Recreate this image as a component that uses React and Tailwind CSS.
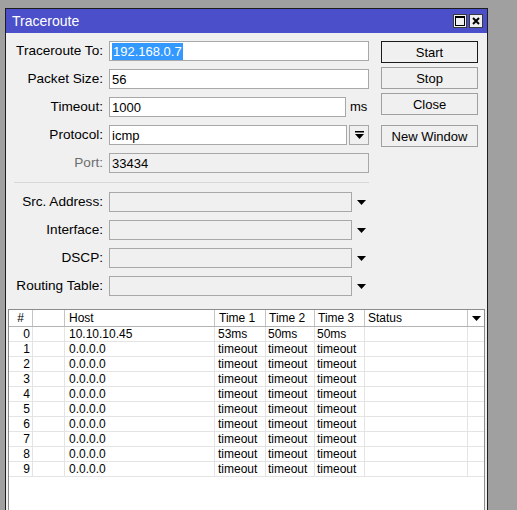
import React from 'react';

const rows = [
  ['0', '10.10.10.45', '53ms', '50ms', '50ms'],
  ['1', '0.0.0.0', 'timeout', 'timeout', 'timeout'],
  ['2', '0.0.0.0', 'timeout', 'timeout', 'timeout'],
  ['3', '0.0.0.0', 'timeout', 'timeout', 'timeout'],
  ['4', '0.0.0.0', 'timeout', 'timeout', 'timeout'],
  ['5', '0.0.0.0', 'timeout', 'timeout', 'timeout'],
  ['6', '0.0.0.0', 'timeout', 'timeout', 'timeout'],
  ['7', '0.0.0.0', 'timeout', 'timeout', 'timeout'],
  ['8', '0.0.0.0', 'timeout', 'timeout', 'timeout'],
  ['9', '0.0.0.0', 'timeout', 'timeout', 'timeout'],
];

const DownArrow = () => (
  <svg width="9" height="5" viewBox="0 0 9 5" className="block">
    <path d="M0 0 H9 L4.5 5 Z" fill="#000" />
  </svg>
);

const Label = ({ children, muted }) => (
  <div className={`w-[98px] shrink-0 text-right pr-[1px] text-[13.6px] ${muted ? 'text-[#6d6d6d]' : 'text-black'}`}>
    {children}
  </div>
);

const Field = ({ value, w = 'w-[260px]', disabled }) => (
  <div
    className={`${w} h-[20px] border border-[#a8a8a8] ${disabled ? 'bg-[#f0f0f0]' : 'bg-white'} px-[2px] flex items-center leading-none`}
  >
    {value}
  </div>
);

const Row = ({ children }) => <div className="flex items-center h-[20px] gap-[5px]">{children}</div>;

const Btn = ({ children, primary }) => (
  <button
    className={`w-[97px] h-[22px] bg-[#f0f0f0] flex items-center justify-center leading-none text-black ${
      primary ? 'border border-[#1a1a1a]' : 'border border-[#a0a0a0]'
    }`}
  >
    {children}
  </button>
);

export default function App() {
  return (
    <div
      className="w-[517px] h-[510px] overflow-hidden bg-[#a0a0a0] pt-[8px] pl-[5px] text-[13px]"
      style={{ fontFamily: '"Liberation Sans", Arial, sans-serif' }}
    >
      <div className="w-[483px] h-[520px] border border-[#1e1e1e] bg-[#f0f0f0] flex flex-col">
        {/* title bar */}
        <div className="h-[24px] bg-[#4b4fc9] flex items-center justify-between pl-[6px] pr-[4px] shrink-0">
          <span className="text-white text-[14px]">Traceroute</span>
          <div className="flex gap-[2px]">
            <div className="w-[14px] h-[14px] bg-[#f0f0f0] border border-[#3a3a3a] flex items-center justify-center">
              <div className="w-[10px] h-[10px] border border-black border-t-2" />
            </div>
            <div className="w-[14px] h-[14px] bg-[#f0f0f0] border border-[#3a3a3a] flex items-center justify-center">
              <svg width="8" height="8" viewBox="0 0 8 8">
                <path d="M1 1 L7 7 M7 1 L1 7" stroke="#000" strokeWidth="2" />
              </svg>
            </div>
          </div>
        </div>

        {/* form */}
        <div className="flex pt-[8px] gap-[12px] shrink-0">
          <div className="flex flex-col gap-[8px] w-[363px]">
            <Row>
              <Label>Traceroute To:</Label>
              <Field
                value={<span className="bg-[#3399ff] text-white py-[2px] px-[1px]">192.168.0.7</span>}
              />
            </Row>
            <Row>
              <Label>Packet Size:</Label>
              <Field value="56" />
            </Row>
            <Row>
              <Label>Timeout:</Label>
              <Field value="1000" w="w-[237px]" />
              <span className="ml-[-1px]">ms</span>
            </Row>
            <Row>
              <Label>Protocol:</Label>
              <Field value="icmp" w="w-[238px]" />
              <div className="w-[20px] h-[20px] ml-[-3px] border border-[#a8a8a8] bg-[#f0f0f0] flex items-center justify-center">
                <svg width="9" height="9" viewBox="0 0 9 9">
                  <rect x="0" y="0" width="9" height="1.5" fill="#000" />
                  <path d="M0 3 H9 L4.5 8 Z" fill="#000" />
                </svg>
              </div>
            </Row>
            <Row>
              <Label muted>Port:</Label>
              <Field value="33434" disabled />
            </Row>
            <div className="h-[1px] bg-[#d8d8d8] ml-[8px] mr-0 my-[1px]" />
            {['Src. Address:', 'Interface:', 'DSCP:', 'Routing Table:'].map((l) => (
              <Row key={l}>
                <Label>{l}</Label>
                <Field value="" w="w-[243px]" disabled />
                <div className="ml-[0px]">
                  <DownArrow />
                </div>
              </Row>
            ))}
          </div>
          <div className="flex flex-col">
            <Btn primary>Start</Btn>
            <div className="h-[4px]" />
            <Btn>Stop</Btn>
            <div className="h-[4px]" />
            <Btn>Close</Btn>
            <div className="h-[10px]" />
            <Btn>New Window</Btn>
          </div>
        </div>

        {/* table */}
        <div className="ml-[2px] mt-[13px] w-[477px] flex-1 border border-[#8c8c8c] bg-white text-[12px] leading-[15px]">
          <div className="grid grid-cols-[24px_32px_150px_51px_49px_50px_103px_16px] h-[17px] border-b border-[#b4b4b4]">
            <div className="border-r border-[#c4c4c4] text-center leading-[16px]">#</div>
            <div className="border-r border-[#c4c4c4]" />
            <div className="border-r border-[#c4c4c4] pl-[4px] leading-[16px]">Host</div>
            <div className="border-r border-[#c4c4c4] pl-[4px] leading-[16px]">Time 1</div>
            <div className="border-r border-[#c4c4c4] pl-[3px] leading-[16px]">Time 2</div>
            <div className="border-r border-[#c4c4c4] pl-[3px] leading-[16px]">Time 3</div>
            <div className="border-r border-[#c4c4c4] pl-[3px] leading-[16px]">Status</div>
            <div className="flex items-center justify-center">
              <DownArrow />
            </div>
          </div>
          {rows.map((r) => (
            <div
              key={r[0]}
              className="grid grid-cols-[24px_32px_150px_51px_49px_50px_103px_16px] h-[15px] border-b border-[#e4e4e4]"
            >
              <div className="border-r border-[#e4e4e4] text-right pr-[2px]">{r[0]}</div>
              <div className="border-r border-[#e4e4e4]" />
              <div className="border-r border-[#e4e4e4] pl-[4px]">{r[1]}</div>
              <div className="border-r border-[#e4e4e4] pl-[3px] overflow-hidden whitespace-nowrap">{r[2]}</div>
              <div className="border-r border-[#e4e4e4] pl-[2px] overflow-hidden whitespace-nowrap">{r[3]}</div>
              <div className="border-r border-[#e4e4e4] pl-[2px] overflow-hidden whitespace-nowrap">{r[4]}</div>
              <div className="border-r border-[#e4e4e4]" />
              <div />
            </div>
          ))}
        </div>
      </div>
    </div>
  );
}
